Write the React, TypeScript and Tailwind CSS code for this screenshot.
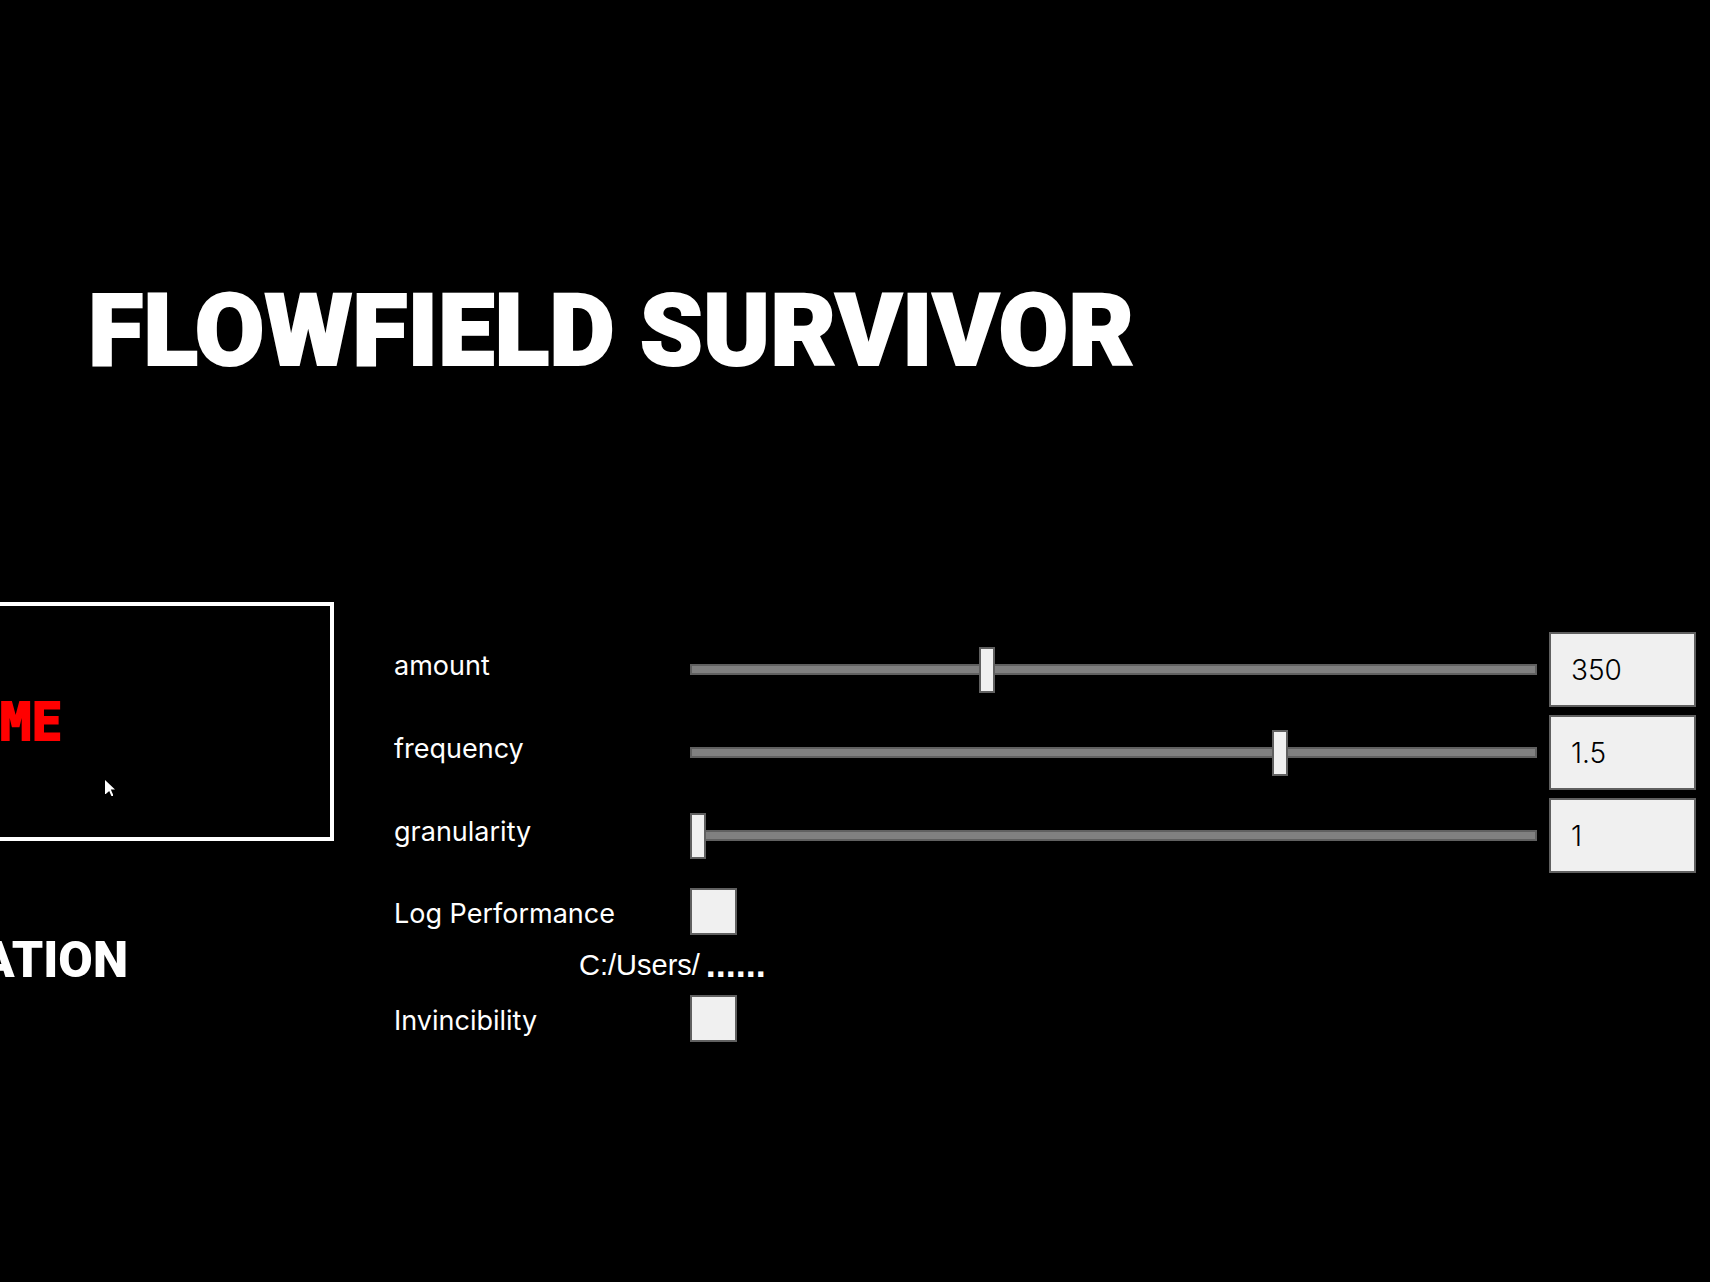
import { useState } from 'react';

type Setting = {
  id: string;
  min: number;
  max: number;
  step: number;
  initial: number;
};

const SETTINGS: Setting[] = [
  { id: 'amount', min: 1, max: 1000, step: 1, initial: 350 },
  { id: 'frequency', min: 0.1, max: 2.09, step: 0.01, initial: 1.5 },
  { id: 'granularity', min: 1, max: 10, step: 1, initial: 1 },
];

const sliderClass =
  "mr-3 h-[46px] min-w-0 cursor-default appearance-none bg-transparent " +
  "[&::-webkit-slider-runnable-track]:h-[11px] [&::-webkit-slider-runnable-track]:border-2 [&::-webkit-slider-runnable-track]:border-[#606060] [&::-webkit-slider-runnable-track]:bg-[#808080] " +
  "[&::-webkit-slider-thumb]:relative [&::-webkit-slider-thumb]:-mx-[2px] [&::-webkit-slider-thumb]:-mt-[19px] [&::-webkit-slider-thumb]:h-[46px] [&::-webkit-slider-thumb]:w-4 [&::-webkit-slider-thumb]:appearance-none [&::-webkit-slider-thumb]:border-2 [&::-webkit-slider-thumb]:border-[#606060] [&::-webkit-slider-thumb]:bg-[#f0f0f0]";

const checkboxClass =
  'size-[47px] appearance-none border-2 border-[#606060] bg-[#f0f0f0] checked:bg-[#808080]';

function SliderRow({ setting }: { setting: Setting }) {
  const [value, setValue] = useState(String(setting.initial));
  return (
    <div className="mb-2 grid h-[75px] grid-cols-[296px_1fr_147px] items-center">
      <label htmlFor={setting.id} className="pb-2">
        {setting.id}
      </label>
      <input
        id={setting.id}
        type="range"
        min={setting.min}
        max={setting.max}
        step={setting.step}
        value={value}
        onChange={(e) => setValue(e.target.value)}
        className={sliderClass}
      />
      <input
        type="text"
        aria-label={`${setting.id} value`}
        value={value}
        onChange={(e) => setValue(e.target.value)}
        className="h-full w-full border-2 border-[#606060] bg-[#f0f0f0] px-5 text-[28px] font-light text-black outline-none"
      />
    </div>
  );
}

function CheckRow({ id, label }: { id: string; label: string }) {
  return (
    <div className="grid h-[61px] grid-cols-[296px_1fr] items-center">
      <label htmlFor={id} className="pt-1">
        {label}
      </label>
      <input id={id} type="checkbox" className={checkboxClass} />
    </div>
  );
}

export default function App() {
  return (
    <main className="relative min-h-screen overflow-hidden bg-black font-['Inter',sans-serif] text-[27px] leading-9 text-white">
      <h1 className="pt-[271px] pl-[88px] font-['Roboto',sans-serif] text-[101px] leading-[120px] font-black whitespace-nowrap [-webkit-text-stroke:2px_white]">
        FLOWFIELD SURVIVOR
      </h1>

      <div className="mt-[211px] flex">
        <nav className="flex w-[334px] shrink-0 flex-col font-['Roboto',sans-serif] font-black">
          <button
            type="button"
            className="flex h-[239px] w-full items-center border-4 border-l-0 border-white font-['DejaVu_Sans_Mono',monospace] text-[52px] leading-none font-bold text-[#ff0000] [-webkit-text-stroke:2px_#ff0000]"
          >
            ME
          </button>
          <button
            type="button"
            className="flex h-[237px] w-32 items-center justify-end text-[50px] leading-none"
          >
            ATION
          </button>
        </nav>

        <form className="ml-[60px] min-w-0 grow pt-[30px] pr-[14px]">
          {SETTINGS.map((setting) => (
            <SliderRow key={setting.id} setting={setting} />
          ))}
          <CheckRow id="log-performance" label="Log Performance" />
          <p className="flex h-[46px] items-center pl-[185px] font-['Liberation_Sans',sans-serif] text-[29px]">
            C:/Users/
            <span className="pl-1.5 text-4xl font-bold">......</span>
          </p>
          <CheckRow id="invincibility" label="Invincibility" />
        </form>
      </div>

      <svg
        className="absolute top-[780px] left-[105px]"
        width="10"
        height="16"
        viewBox="0 0 10 16"
        fill="white"
        aria-hidden="true"
      >
        <path d="M0 0 L10 9.6 H5.8 L8 14.5 V16 H6.4 L4.2 11 L0.8 14 H0 Z" />
      </svg>
    </main>
  );
}
